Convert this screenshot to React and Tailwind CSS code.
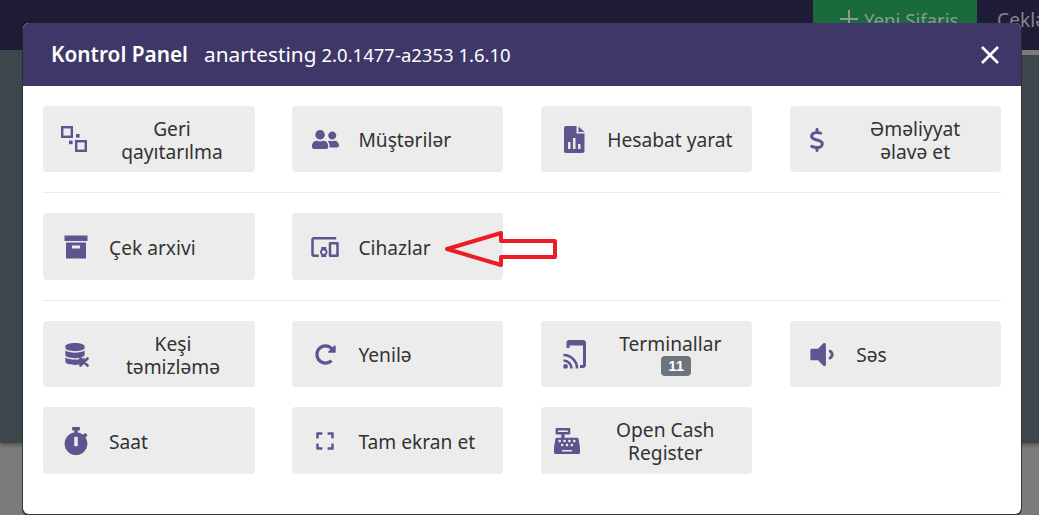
import React from "react";
import { FaUserFriends, FaDatabase, FaRedoAlt, FaVolumeDown, FaStopwatch, FaExpand, FaCashRegister } from "react-icons/fa";
import { FaDollarSign } from "react-icons/fa6";
import { MdDevicesOther } from "react-icons/md";

const ic = "text-[#5e548e]";

const Ungroup = () => (
  <svg width="27" height="27" viewBox="0 0 27 27" className={ic} fill="none" stroke="currentColor" strokeWidth="2.4">
    <rect x="1.2" y="1.2" width="9.6" height="9.6" />
    <rect x="15.2" y="15.2" width="9.6" height="9.6" />
    <rect x="15" y="8" width="3.6" height="3.6" fill="currentColor" stroke="none" />
    <rect x="8" y="14.6" width="3.6" height="3.6" fill="currentColor" stroke="none" />
  </svg>
);

const ArchiveBox = () => (
  <svg width="24" height="24" viewBox="0 0 24 24" className={ic} fill="currentColor">
    <path d="M0.5 0.5h23v5.5h-23Z" />
    <path fillRule="evenodd" d="M2 7.5h20V23.5H2ZM8 10.5v3h8v-3Z" />
  </svg>
);

const FileChart = () => (
  <svg width="21" height="27" viewBox="0 0 21 27" className={ic} fill="currentColor">
    <path fillRule="evenodd" d="M2 0h10.5v7.5H20.5V25a2 2 0 0 1-2 2H2a2 2 0 0 1-2-2V2a2 2 0 0 1 2-2ZM4 16h2.5v7H4Zm5-4h2.5v11H9Zm5 6h2.5v5H14Z" />
    <path d="M14.5 0.5l6 5.5h-6Z" />
  </svg>
);

const MobileCast = () => (
  <svg width="23" height="29" viewBox="0 0 23 29" className={ic} fill="none" stroke="currentColor">
    <path d="M5 8V3a1.5 1.5 0 0 1 1.5-1.5H20A1.5 1.5 0 0 1 21.5 3v22a1.5 1.5 0 0 1-1.5 1.5h-3" strokeWidth="3" />
    <path d="M5 1.5h16V5H5Z" fill="currentColor" strokeWidth="1" />
    <circle cx="2.6" cy="26.4" r="2.3" fill="currentColor" stroke="none" />
    <path d="M0.5 20.5a8 8 0 0 1 8 8M0.5 15a13.5 13.5 0 0 1 13.5 13.5" strokeWidth="2.6" />
  </svg>
);

const CacheClear = () => (
  <span className="relative inline-block w-[25px] h-[24px]">
    <FaDatabase size={22} className={ic} />
    <svg width="10" height="10" viewBox="0 0 10 10" className={`${ic} absolute right-0 bottom-0`} stroke="currentColor" strokeWidth="2.6" strokeLinecap="round">
      <path d="M1.5 1.5l7 7M8.5 1.5l-7 7" />
    </svg>
  </span>
);

function Tile({ icon, box = "w-[34px] ml-[16px]", text = "ml-[16px] w-[130px] text-left", children }) {
  return (
    <div className="h-[66.4px] bg-[#ececec] rounded-[4px] flex items-center text-[19.2px] leading-[23px] text-[#333] pt-[1.4px]">
      <div className={`${box} shrink-0 flex justify-center items-center`}>{icon}</div>
      <div className={text}>{children}</div>
    </div>
  );
}

const Divider = () => <hr className="border-t border-[#ececec] my-[20px]" />;
const Wrap = "ml-[18px] w-[124px] text-center";
const Cols = "grid grid-cols-[211.5px_211px_211px_210.8px] gap-x-[37.9px]";

export default function App() {
  return (
    <div className="relative w-[1039px] h-[515px] overflow-hidden bg-[#7b7b7b]" style={{ fontFamily: '"Noto Sans", sans-serif' }}>
      <div className="h-[50px] bg-[#1f1c38] flex justify-end">
        <div className="w-[164px] h-full bg-[#1a6b3c] text-[#8f9a94] text-[18.6px] flex items-start justify-start pl-[27px] gap-[6px] mr-[20px] pt-[6px]">
          <svg width="18" height="18" viewBox="0 0 18 18" className="mt-[4px] shrink-0" stroke="currentColor" strokeWidth="2">
            <path d="M9 0v18M0 9h18" />
          </svg>
          <span className="whitespace-nowrap">Yeni Sifariş</span>
        </div>
        <div className="w-[42px] text-[#85838f] text-[19.2px] pt-[6px] overflow-hidden whitespace-nowrap">Çeklər</div>
      </div>
      <div className="h-[393px] bg-[#3d464b] shadow-[0_2px_4px_rgba(0,0,0,0.35)]">
        <div className="ml-auto w-[40px] h-[5px] bg-[#7b7b7b]" />
      </div>

      <div className="absolute left-[23px] top-[23px] w-[998px] h-[491px] bg-white rounded-[6px] overflow-hidden shadow-[0_1px_0_1px_rgba(40,40,40,0.8)]">
        <div className="h-[63px] bg-[#3e3768] text-white flex items-center pl-[28px] pr-[22px]">
          <span className="text-[20.8px] font-semibold">Kontrol Panel</span>
          <span className="text-[20.8px] ml-[16px]">anartesting</span>
          <span className="text-[18.5px] ml-[5px]">2.0.1477-a2353 1.6.10</span>
          <svg width="18" height="18" viewBox="0 0 18 18" className="ml-auto" stroke="#fff" strokeWidth="2.6">
            <path d="M1 1l16 16M17 1L1 17" />
          </svg>
        </div>
        <div className="px-[20px] pt-[20px]">
          <div className={Cols}>
            <Tile text="ml-[22px] w-[124px] text-center" box="w-[27px] ml-[18px]" icon={<Ungroup />}>Geri qayıtarılma</Tile>
            <Tile icon={<FaUserFriends size={27} className={ic} />}>Müştərilər</Tile>
            <Tile icon={<FileChart />}>Hesabat yarat</Tile>
            <Tile box="w-[22px] ml-[16px]" text="ml-[25px] w-[124px] text-center" icon={<FaDollarSign size={24} className={ic} />}>Əməliyyat əlavə et</Tile>
          </div>
          <Divider />
          <div className={Cols}>
            <Tile icon={<ArchiveBox />}>Çek arxivi</Tile>
            <Tile icon={<MdDevicesOther size={30} className={ic} />}>Cihazlar</Tile>
          </div>
          <Divider />
          <div className={`${Cols} gap-y-[20px]`}>
            <Tile text={Wrap} icon={<CacheClear />}>Keşi təmizləmə</Tile>
            <Tile icon={<FaRedoAlt size={21} className={ic} />}>Yenilə</Tile>
            <Tile text="ml-[17px] w-[124px] text-center -mt-[2px]" icon={<MobileCast />}>
              Terminallar
              <div className="flex justify-center">
                <span className="ml-[12px] mt-[1px] bg-[#6c757d] text-white rounded-[4px] text-[15px] leading-[20px] px-[7px] font-bold" style={{ fontFamily: '"Liberation Sans", sans-serif' }}>11</span>
              </div>
            </Tile>
            <Tile box="w-[24px] ml-[20px]" text="ml-[22px] w-[120px]" icon={<FaVolumeDown size={31} className={ic} />}>Səs</Tile>
            <Tile icon={<FaStopwatch size={28} className={ic} />}>Saat</Tile>
            <Tile icon={<FaExpand size={20} className={ic} />}>Tam ekran et</Tile>
            <Tile box="w-[26px] ml-[13px]" text="ml-[23px] w-[124px] text-center" icon={<FaCashRegister size={26} className={ic} />}>Open Cash Register</Tile>
          </div>
        </div>
      </div>

      <svg className="absolute left-[440px] top-[225px]" width="125" height="48" viewBox="440 225 125 48" stroke="#ed1c24" strokeWidth="4" strokeLinejoin="round">
        <path d="M447 249L501 233V241H555V257H501V265Z" fill="none" />
      </svg>
    </div>
  );
}
